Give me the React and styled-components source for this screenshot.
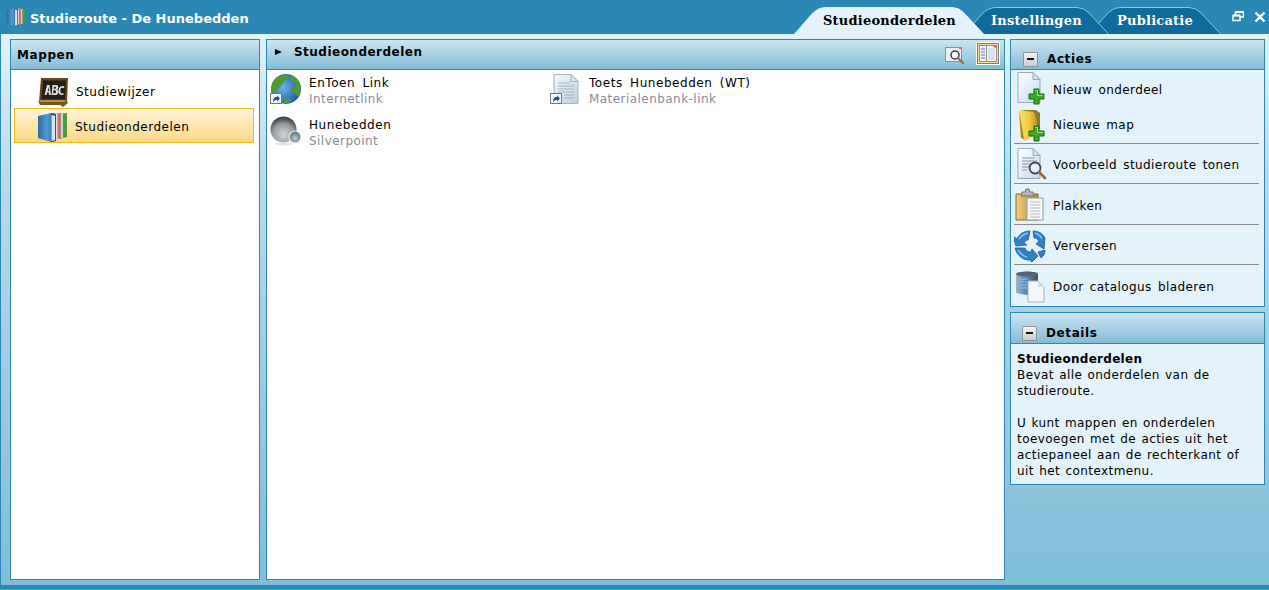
import React from 'react';
import styled, { createGlobalStyle } from 'styled-components';

const GlobalStyle = createGlobalStyle`
  html, body {
    margin: 0;
    padding: 0;
    height: 100%;
    overflow: hidden;
    background: #8a8a8a;
  }
`;

const Window = styled.div`
  width: 1269px;
  height: 589px;
  box-sizing: border-box;
  display: flex;
  flex-direction: column;
  background: #2b87b3;
  padding: 0 0 4px 1px;
  font-family: 'DejaVu Sans', Verdana, sans-serif;
  font-size: 12px;
  color: #000;
`;

const TitleBar = styled.header`
  height: 34px;
  flex: none;
  display: flex;
  align-items: flex-end;
  padding-right: 3px;
`;

const AppTitle = styled.div`
  align-self: center;
  display: flex;
  align-items: center;
  gap: 4px;
  padding-left: 5px;
  color: #fff;
  font-size: 13px;
  font-weight: bold;
`;

const AppTitleText = styled.span`
  padding-top: 2px;
`;

const TabStrip = styled.nav`
  display: flex;
  margin-left: auto;
`;

const TabRoot = styled.div`
  position: relative;
  width: ${(p) => p.$width}px;
  height: 27px;
  margin-left: ${(p) => (p.$first ? 0 : -20)}px;
  z-index: ${(p) => p.$z};
  box-sizing: border-box;
  padding: 5px 0 0 ${(p) => p.$inset}px;
  font-family: 'DejaVu Serif', 'Liberation Serif', serif;
  font-size: 13px;
  font-weight: bold;
  line-height: 18px;
  letter-spacing: 0.22px;
  color: ${(p) => (p.$active ? '#000' : '#fff')};
`;

const TabShape = styled.svg`
  position: absolute;
  inset: 0;
`;

const TabLabel = styled.span`
  position: relative;
`;

const WindowControls = styled.div`
  align-self: center;
  display: flex;
  gap: 10px;
  margin-left: 11px;
`;

const Workspace = styled.main`
  flex: 1;
  min-height: 0;
  display: flex;
  padding: 5px 4px 5px 9px;
  background: linear-gradient(#e4f2f9 0%, #b9dbea 25%, #80bdd9 100%);
`;

const Panel = styled.section`
  box-sizing: border-box;
  display: flex;
  flex-direction: column;
  border: 1px solid #2b87b3;
  background: ${(p) => p.$tint || '#fff'};
`;

const FolderPanel = styled(Panel)`
  width: 250px;
  margin-right: 6px;
`;

const ContentPanel = styled(Panel)`
  flex: 1;
  margin-right: 5px;
`;

const SideColumn = styled.aside`
  width: 255px;
  display: flex;
  flex-direction: column;
  gap: 5px;
`;

const PanelHeader = styled.div`
  flex: none;
  height: ${(p) => p.$height || 30}px;
  box-sizing: border-box;
  display: flex;
  align-items: center;
  padding: ${(p) => p.$pad || '0 6px'};
  border-bottom: 1px solid #2b87b3;
  background: linear-gradient(#cbe6f1, #84bcd8);
  font-weight: bold;
  letter-spacing: 0.6px;
`;

const FolderList = styled.div`
  display: flex;
  flex-direction: column;
  gap: 1px;
  padding: 2px 5px 0 3px;
`;

const FolderItem = styled.div`
  height: 35px;
  box-sizing: border-box;
  display: flex;
  align-items: center;
  gap: ${(p) => (p.$selected ? 6 : 7)}px;
  padding: ${(p) => (p.$selected ? 2 : 5)}px 0 0 22px;
  border: 1px solid ${(p) => (p.$selected ? '#f3b81f' : 'transparent')};
  background: ${(p) => (p.$selected ? 'linear-gradient(#fff4da, #ffd884)' : 'none')};
  letter-spacing: 0.5px;
`;

const CrumbArrow = styled.span`
  width: 0;
  height: 0;
  margin: 0 12px 6px 0;
  border-left: 7px solid #000;
  border-top: 3.5px solid transparent;
  border-bottom: 3.5px solid transparent;
`;

const CrumbTitle = styled.span`
  flex: 1;
  padding-bottom: 6px;
  letter-spacing: 0.48px;
`;

const ToggleButton = styled.button`
  width: 24px;
  height: 23px;
  margin: 0 0 2px 11px;
  padding: 0;
  display: flex;
  align-items: center;
  justify-content: center;
  border: 1px solid ${(p) => (p.$on ? '#fff' : 'transparent')};
  outline: ${(p) => (p.$on ? '1px solid #8a7a5c' : 'none')};
  outline-offset: -2px;
  background: ${(p) => (p.$on ? '#f7dca0' : 'none')};
`;

const ItemGrid = styled.div`
  display: grid;
  grid-template-columns: 280px 280px;
  grid-auto-rows: 32px;
  row-gap: 10px;
  padding: 5px 0 0 3px;
`;

const Item = styled.div`
  display: flex;
  align-items: center;
  gap: 7px;
  line-height: 16px;
  letter-spacing: 0.45px;
  svg {
    margin-top: -4px;
  }
`;

const ItemName = styled.div`
  word-spacing: 3px;
  letter-spacing: 0.55px;
`;

const ItemKind = styled.div`
  color: #8b8b96;
`;

const ActionRow = styled.div`
  height: ${(p) => p.$height}px;
  box-sizing: border-box;
  margin: 0 5px 0 3px;
  display: flex;
  align-items: center;
  gap: 5px;
  border-bottom: ${(p) => (p.$divider ? '1px solid #8a8a8a' : 'none')};
  letter-spacing: 0.42px;
  word-spacing: 2px;
`;

const ActionLabel = styled.span`
  padding-top: ${(p) => p.$nudge}px;
`;

const CollapseBox = styled.span`
  width: 13px;
  height: 13px;
  margin-right: 9px;
  display: flex;
  align-items: center;
  justify-content: center;
  border: 1px solid #8f969b;
  border-radius: 1px;
  background: linear-gradient(#f4f4f4, #c8cccf);
  &::before {
    content: '';
    width: 7px;
    height: 2px;
    background: #111;
  }
`;

const DetailBody = styled.div`
  padding: 7px 6px 5px;
  line-height: 16px;
  letter-spacing: 0.43px;
  word-spacing: 1px;
`;

const DetailTitle = styled.div`
  font-weight: bold;
  letter-spacing: 0.28px;
`;

const DetailGap = styled.div`
  height: 16px;
`;

const BooksIcon = ({ size = 32, id = 'bookBlue' }) => (
  <svg width={size} height={size} viewBox="0 0 32 32">
    <defs>
      <linearGradient id={id} x1="0" x2="1" y1="0" y2="0">
        <stop offset="0" stopColor="#2a6aa2" />
        <stop offset="0.5" stopColor="#4f9bd6" />
        <stop offset="1" stopColor="#22608f" />
      </linearGradient>
    </defs>
    <path d="M22 3l8-1v24l-8 2z" fill="#4f9a48" />
    <path d="M24 3h2v24h-2z" fill="#bfe0b8" />
    <path d="M16 3l8-1v25l-8 2z" fill="#b87a78" />
    <path d="M18.500 3h2v25h-2z" fill="#ecd6d4" />
    <path d="M1 5l13-3 5 1v27l-5 1-13-4z" fill={`url(#${id})`} />
    <path d="M14 2l5 1v27l-5 1z" fill="#1f5e92" />
    <path d="M14.500 4l3.500 1v24l-3.500 1z" fill="#d8e4ee" />
  </svg>
);

const BoardIcon = () => (
  <svg width="32" height="32" viewBox="0 0 32 32">
    <path d="M4 2h27l-1 24H2z" fill="#6a4516" />
    <path d="M6 4.500h23l-1 19H4.500z" fill="#201d1a" />
    <path d="M1 25l29 0 1 2-5 4-3-2H3z" fill="#7a5520" />
    <path d="M3 24h26l-1 2H2z" fill="#b98a3e" />
    <path d="M7.500 19l2.500-10h2.500l1.500 10h-2l-.3-2.500H10.300l-.8 2.500zM10.800 15h1.400l-.4-4zM15.500 9h4c2 0 2.500 3.500.5 4.500 2.200.8 1.500 5.500-1 5.500h-4.500zm1.600 1.700l-.4 2h1.500c1 0 1-2 0-2zm-.6 3.600l-.4 3h1.900c1.300 0 1.300-3 0-3zM27.500 10.500l-.5 1.700c-2.300-1.200-3.600-.5-3.600 2.300 0 2.800 1.200 3.600 3.300 2.400l-.2 1.800c-3.500 1.300-5.200-.8-5-4.200.2-3.800 2.800-5.500 6-4z" fill="#dddcd6" />
  </svg>
);

const PlusMark = ({ x, y }) => (
  <g transform={`translate(${x} ${y})`}>
    <path d="M5 0h5v5h5v5h-5v5H5v-5H0V5h5z" fill="#3aa82a" stroke="#146a12" strokeWidth="1" />
    <path d="M6 1h3v5h5v1H8V2H6z" fill="#8fe07a" />
  </g>
);

const Sheet = ({ id }) => (
  <g>
    <defs>
      <linearGradient id={id} x1="0" x2="1" y1="0" y2="1">
        <stop offset="0" stopColor="#ffffff" />
        <stop offset="1" stopColor="#c3d9ec" />
      </linearGradient>
    </defs>
    <path d="M4 1.500h15l7 7v23H4z" fill={`url(#${id})`} stroke="#9aa9b8" strokeWidth="1" />
    <path d="M19 1.500l7 7h-7z" fill="#d5e3f0" stroke="#9aa9b8" strokeWidth="1" />
  </g>
);

const NewPartIcon = () => (
  <svg width="34" height="34" viewBox="0 0 34 34">
    <Sheet id="newSheet" />
    <PlusMark x={15} y={18} />
  </svg>
);

const NewFolderIcon = () => (
  <svg width="34" height="34" viewBox="0 0 34 34">
    <defs>
      <linearGradient id="folderGold" x1="0" x2="1" y1="0" y2="0">
        <stop offset="0" stopColor="#fbe36a" />
        <stop offset="0.6" stopColor="#f0c53a" />
        <stop offset="1" stopColor="#c39a20" />
      </linearGradient>
    </defs>
    <path d="M8 2h14l4 3v16L13 20z" fill="#8c7a3a" />
    <path d="M5 2l15 2 3 9v12L11 33 7 30z" fill="url(#folderGold)" />
    <path d="M5 2l5 29-3-1z" fill="#a8861c" />
    <PlusMark x={15} y={18} />
  </svg>
);

const TextLines = () => (
  <path d="M8 11h13M8 14h15M8 17h15M8 20h8M8 23h5" stroke="#a9b4c0" strokeWidth="1.500" fill="none" />
);

const PreviewIcon = () => (
  <svg width="34" height="34" viewBox="0 0 34 34">
    <Sheet id="previewSheet" />
    <TextLines />
    <circle cx="21" cy="21" r="5.500" fill="#e9f2f9" stroke="#3d4a55" strokeWidth="1.800" />
    <path d="M25 25l6 6" stroke="#9a6a3a" strokeWidth="2.800" strokeLinecap="round" />
  </svg>
);

const PasteIcon = () => (
  <svg width="34" height="35" viewBox="0 -1 34 35">
    <defs>
      <linearGradient id="board" x1="0" x2="1" y1="0" y2="0">
        <stop offset="0" stopColor="#f0cd80" />
        <stop offset="1" stopColor="#b88a3c" />
      </linearGradient>
    </defs>
    <path d="M2 6h22v26H2z" fill="url(#board)" stroke="#8a6a2a" />
    <path d="M8 4h3l1-3h3l1 3h3l1 4H7z" fill="#b6b4ac" stroke="#77756c" />
    <path d="M13 10h16v22H13z" fill="#f4f6f8" stroke="#8c98a4" />
    <path d="M16 14h10M16 17h10M16 20h10M16 23h10M16 26h10M16 29h10" stroke="#b4bec8" />
  </svg>
);

const RefreshIcon = () => (
  <svg width="34" height="34" viewBox="0 0 34 34">
    <g fill="#2f80c8" stroke="#1a5c96" strokeWidth="0.800">
      <path d="M3 11c2-5 7-8 13-8l-1 5-1 4c-2 0-3 1-4 3l3 2-11 1-3-10z" />
      <path d="M19 3c6 0 10 3 12 7l-1 11-8-5 3-3c-1-2-3-3-5-3l-1-7z" />
      <path d="M1 20l10 0c1 3 3 4 6 4l1-3 6 7-7 7 0-3c-7 1-14-4-16-12z" />
      <path d="M24 24l7-2c0 3-1 6-4 8z" />
    </g>
    <path d="M5 11c2-3 5-5 9-6M21 5c3 1 6 3 7 6M4 22c2 3 4 6 9 7" stroke="#8cc4ee" strokeWidth="1.500" fill="none" />
  </svg>
);

const CatalogIcon = () => (
  <svg width="34" height="34" viewBox="0 0 34 34">
    <defs>
      <linearGradient id="can" x1="0" x2="1" y1="0" y2="0">
        <stop offset="0" stopColor="#a9b2ba" />
        <stop offset="0.4" stopColor="#4f8ec8" />
        <stop offset="1" stopColor="#46505c" />
      </linearGradient>
    </defs>
    <path d="M2 5c0-3 22-3 22 0v23L2 24z" fill="url(#can)" />
    <ellipse cx="13" cy="5" rx="11" ry="2.500" fill="#5a626c" />
    <path d="M5 10h9M5 13h9M5 16h9M5 19h9" stroke="#8cc0ea" strokeWidth="1.200" />
    <path d="M14 12h10l6 6v15H14z" fill="#f4f7fa" stroke="#a6b0ba" />
    <path d="M24 12l6 6h-6z" fill="#d4dde6" />
  </svg>
);

const ShortcutBadge = () => (
  <g>
    <rect x="0.500" y="20.500" width="11" height="10" fill="#f4f4f4" stroke="#777" />
    <path d="M3 29c0-3 1-5 4-5v-1.500l3 3-3 3V27c-2 0-3 .5-4 2z" fill="#1e4fa0" />
  </g>
);

const GlobeIcon = () => (
  <svg width="32" height="32" viewBox="0 0 32 32">
    <defs>
      <radialGradient id="sea" cx="0.400" cy="0.450" r="0.600">
        <stop offset="0" stopColor="#6db4f4" />
        <stop offset="1" stopColor="#1c5aa8" />
      </radialGradient>
    </defs>
    <circle cx="16" cy="16" r="15" fill="url(#sea)" />
    <path d="M6 5c4-3 10-4 13-2 0 3-3 4-5 5-1 3-4 5-5 8-2 1-4 3-7 3-1-6 0-10 4-14zM21 2c5 2 9 7 10 12-1 2 0 6-2 9-2 1-3-3-5-3s-4-4-2-6 3 0 5-2c-2-2-5-3-6-5-1-2-1-3 0-5zM14 26c3-1 6 0 8 1-2 2-5 4-8 3z" fill="#4f9a34" />
    <ShortcutBadge />
  </svg>
);

const SilverIcon = () => (
  <svg width="32" height="32" viewBox="0 0 32 32">
    <defs>
      <radialGradient id="silverBig" cx="0.500" cy="0.700" r="0.650">
        <stop offset="0" stopColor="#cfd3d6" />
        <stop offset="0.650" stopColor="#959b9f" />
        <stop offset="1" stopColor="#3f4245" />
      </radialGradient>
      <radialGradient id="silverSmall" cx="0.500" cy="0.600" r="0.600">
        <stop offset="0" stopColor="#b8cfdc" />
        <stop offset="1" stopColor="#596267" />
      </radialGradient>
    </defs>
    <ellipse cx="14" cy="29" rx="10" ry="1.500" fill="#e4e4e4" />
    <circle cx="13.500" cy="14.500" r="13" fill="url(#silverBig)" />
    <circle cx="25" cy="22" r="6" fill="url(#silverSmall)" stroke="#eef1f2" strokeWidth="1.200" />
  </svg>
);

const TestLinkIcon = () => (
  <svg width="32" height="32" viewBox="0 0 32 32">
    <defs>
      <linearGradient id="testSheet" x1="0" x2="1" y1="0" y2="1">
        <stop offset="0" stopColor="#f6f8fb" />
        <stop offset="1" stopColor="#bccfe2" />
      </linearGradient>
    </defs>
    <path d="M4 1.500h17l7 7v22H4z" fill="url(#testSheet)" stroke="#a4b1be" />
    <path d="M21 1.500l7 7h-7z" fill="#dfe8f1" stroke="#a4b1be" />
    <path d="M8 10h12M8 13h16M8 16h16M8 19h16M14 22h10M14 25h10" stroke="#a9b4c0" strokeWidth="1.200" />
    <ShortcutBadge />
  </svg>
);

const MagnifyButton = () => (
  <svg width="20" height="20" viewBox="0 0 20 20">
    <rect x="0.500" y="2.500" width="16" height="14" fill="#eceff1" stroke="#8e9296" />
    <rect x="14" y="2" width="3" height="2" fill="#d86a5a" />
    <circle cx="10" cy="10" r="4" fill="#fff" stroke="#3a3f44" strokeWidth="1.500" />
    <path d="M13 13l5 5" stroke="#9a6a3a" strokeWidth="2.200" strokeLinecap="round" />
  </svg>
);

const ColumnsButton = () => (
  <svg width="18" height="17" viewBox="0 0 18 17">
    <rect x="0.500" y="0.500" width="17" height="16" fill="#f0f4f8" stroke="#8c8f94" />
    <rect x="14.500" y="0.500" width="3" height="2" fill="#d86a5a" />
    <path d="M7.500 1v15" stroke="#8c8f94" />
    <path d="M2 4h4M2 7h4M2 10h4M2 13h4" stroke="#7aa8dc" strokeWidth="1.500" />
    <rect x="9" y="3" width="7" height="12" fill="#d8e4f0" />
  </svg>
);

const RestoreGlyph = () => (
  <svg width="12" height="11" viewBox="0 0 12 11">
    <path d="M3.500 4V1h8v5H8" fill="none" stroke="#fff" strokeWidth="1.500" />
    <rect x="1" y="4.500" width="7" height="5" fill="none" stroke="#fff" strokeWidth="1.500" />
    <path d="M3.500 1h8M1 4.500h7" stroke="#fff" strokeWidth="2" />
  </svg>
);

const CloseGlyph = () => (
  <svg width="12" height="12" viewBox="0 0 12 12">
    <path d="M1.500 1.500l9 9M10.500 1.500l-9 9" stroke="#fff" strokeWidth="2.400" />
  </svg>
);

const Tab = ({ width, inset, z, active, first, children }) => (
  <TabRoot $width={width} $inset={inset} $z={z} $active={active} $first={first}>
    <TabShape width={width} height="27" viewBox={`0 0 ${width} 27`}>
      <path
        d={`M0.500 27L18 7Q24 0.500 32 0.500H${width - 32}Q${width - 25} 0.500 ${width - 20} 6L${width - 0.5} 27`}
        fill={active ? '#e4f2f9' : '#0e6b9c'}
        stroke={active ? '#e4f2f9' : '#8fc4dc'}
      />
    </TabShape>
    <TabLabel>{children}</TabLabel>
  </TabRoot>
);

const ACTIONS = [
  { label: 'Nieuw onderdeel', Icon: NewPartIcon, height: 36, nudge: 4 },
  { label: 'Nieuwe map', Icon: NewFolderIcon, height: 38, nudge: 0, divider: true },
  { label: 'Voorbeeld studieroute tonen', Icon: PreviewIcon, height: 40, nudge: 2, divider: true },
  { label: 'Plakken', Icon: PasteIcon, height: 41, nudge: 4, divider: true },
  { label: 'Verversen', Icon: RefreshIcon, height: 40, nudge: 2, divider: true },
  { label: 'Door catalogus bladeren', Icon: CatalogIcon, height: 41, nudge: 2 },
];

const ITEMS = [
  { name: 'EnToen Link', kind: 'Internetlink', Icon: GlobeIcon },
  { name: 'Toets Hunebedden (WT)', kind: 'Materialenbank-link', Icon: TestLinkIcon },
  { name: 'Hunebedden', kind: 'Silverpoint', Icon: SilverIcon },
];

const App = () => (
  <>
    <GlobalStyle />
    <Window>
      <TitleBar>
        <AppTitle>
          <BooksIcon size={20} id="titleBook" />
          <AppTitleText>Studieroute - De Hunebedden</AppTitleText>
        </AppTitle>
        <TabStrip>
          <Tab width={190} inset={29} z={3} active first>Studieonderdelen</Tab>
          <Tab width={145} inset={27} z={2}>Instellingen</Tab>
          <Tab width={132} inset={28} z={1}>Publicatie</Tab>
        </TabStrip>
        <WindowControls>
          <RestoreGlyph />
          <CloseGlyph />
        </WindowControls>
      </TitleBar>

      <Workspace>
        <FolderPanel>
          <PanelHeader>Mappen</PanelHeader>
          <FolderList>
            <FolderItem>
              <BoardIcon />
              Studiewijzer
            </FolderItem>
            <FolderItem $selected>
              <BooksIcon />
              Studieonderdelen
            </FolderItem>
          </FolderList>
        </FolderPanel>

        <ContentPanel>
          <PanelHeader $pad="0 4px 0 8px">
            <CrumbArrow />
            <CrumbTitle>Studieonderdelen</CrumbTitle>
            <MagnifyButton />
            <ToggleButton $on>
              <ColumnsButton />
            </ToggleButton>
          </PanelHeader>
          <ItemGrid>
            {ITEMS.map(({ name, kind, Icon }) => (
              <Item key={name}>
                <Icon />
                <div>
                  <ItemName>{name}</ItemName>
                  <ItemKind>{kind}</ItemKind>
                </div>
              </Item>
            ))}
          </ItemGrid>
        </ContentPanel>

        <SideColumn>
          <Panel $tint="#e4f2f9">
            <PanelHeader $pad="9px 12px 0">
              <CollapseBox />
              Acties
            </PanelHeader>
            {ACTIONS.map(({ label, Icon, height, nudge, divider }) => (
              <ActionRow key={label} $height={height} $divider={divider}>
                <Icon />
                <ActionLabel $nudge={nudge}>{label}</ActionLabel>
              </ActionRow>
            ))}
          </Panel>
          <Panel $tint="#e4f2f9">
            <PanelHeader $height={31} $pad="10px 11px 0">
              <CollapseBox />
              Details
            </PanelHeader>
            <DetailBody>
              <DetailTitle>Studieonderdelen</DetailTitle>
              Bevat alle onderdelen van de
              <br />
              studieroute.
              <DetailGap />
              U kunt mappen en onderdelen
              <br />
              toevoegen met de acties uit het
              <br />
              actiepaneel aan de rechterkant of
              <br />
              uit het contextmenu.
            </DetailBody>
          </Panel>
        </SideColumn>
      </Workspace>
    </Window>
  </>
);

export default App;
